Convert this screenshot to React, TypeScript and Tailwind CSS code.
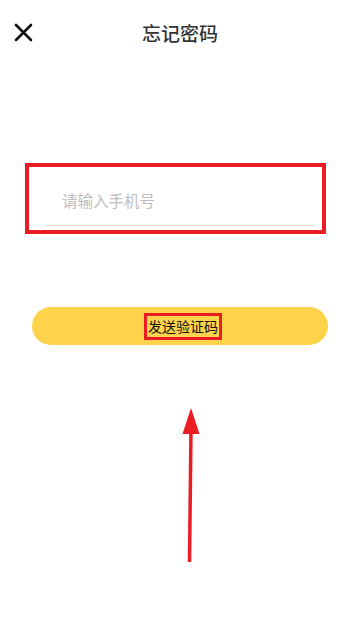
export default function App() {
  return (
    <div className="relative w-[360px] h-[618px] overflow-hidden bg-white font-['Noto_Sans_CJK_SC','Noto_Sans',sans-serif]">
      <header className="grid h-[64px] grid-cols-[1fr_auto_1fr] items-center">
        <button className="ml-[13px] flex h-[20px] w-[20px] items-center justify-center justify-self-start">
          <svg width="19" height="19" viewBox="0 0 19 19">
            <path d="M2 2 L17 17 M17 2 L2 17" stroke="#111" strokeWidth="2.6" strokeLinecap="round" />
          </svg>
        </button>
        <h1 className="text-[19px] font-medium leading-none text-[#333]">忘记密码</h1>
        <div />
      </header>

      <div className="ml-[25px] mt-[99px] h-[71px] w-[301px] border-[4px] border-[#ea1c24]">
        <div className="ml-[17px] mr-[8px] mt-[20px] border-b border-[#d4d4d4] pb-[12px] pl-[16px]">
          <input
            placeholder="请输入手机号"
            className="w-full bg-transparent text-[15.5px] leading-[26px] text-[#333] outline-none placeholder:text-[#bdbdbd]"
          />
        </div>
      </div>

      <div className="ml-[32px] mt-[73px] flex h-[38px] w-[296px] items-center justify-center rounded-full bg-[#fdd34b]">
        <span className="ml-[6px] border-[3px] border-[#ea1c24] px-[1px] text-[14px] leading-[21px] text-[#111]">
          发送验证码
        </span>
      </div>

      <svg className="pointer-events-none absolute left-0 top-0" width="360" height="618" viewBox="0 0 360 618">
        <line x1="191" y1="430" x2="189.5" y2="562" stroke="#ea1c24" strokeWidth="3.5" />
        <polygon points="191,408 182.5,434 199.5,434" fill="#ea1c24" />
      </svg>
    </div>
  );
}
